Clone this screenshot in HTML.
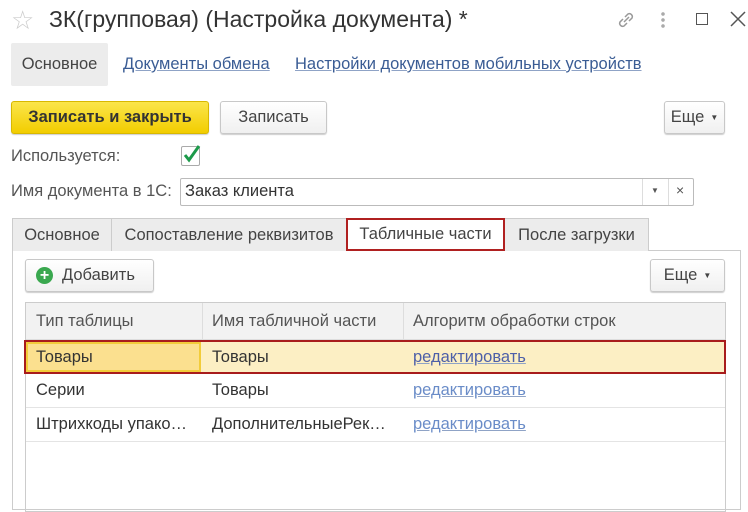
<!DOCTYPE html>
<html><head><meta charset="utf-8"><style>
*{box-sizing:border-box;margin:0;padding:0}
body{width:748px;height:502px;overflow:hidden;background:#fff;font-family:"Liberation Sans",Arial,sans-serif;font-size:16.5px;color:#333;position:relative}
.a{position:absolute;white-space:nowrap}
.btn{position:absolute;border:1px solid #c8c8c8;border-radius:3px;background:linear-gradient(#fff,#f0f0f0);box-shadow:0 1px 1px rgba(0,0,0,.2);display:flex;align-items:center;justify-content:center;color:#444}
.lnk{color:#3a5c94;text-decoration:underline;text-decoration-color:#8fa3c6}
.tab{position:absolute;top:218px;height:33px;background:#ececec;border:1px solid #ccc;border-bottom:none;display:flex;align-items:center;justify-content:center;color:#444}
.cell{position:absolute;display:flex;align-items:center;padding-left:11px}
</style></head><body>
<div class="a" style="left:11px;top:5px;font-size:26px;color:#ccc">☆</div>
<div class="a" style="left:49px;top:6px;font-size:23px;color:#333">ЗК(групповая) (Настройка документа) *</div>
<svg class="a" style="left:614px;top:8px" width="24" height="24" viewBox="0 0 24 24" fill="none" stroke="#999" stroke-width="1.5"><path d="M10 14l5-5M9 11l-3 3a3 3 0 0 0 4 4l3-3M15 13l3-3a3 3 0 0 0-4-4l-3 3"/></svg>
<div class="a" style="left:661px;top:11px;width:4px;height:17px;background:radial-gradient(circle,#aaa 1.6px,transparent 2px) 0 0/4px 6px"></div>
<div class="a" style="left:696px;top:13px;width:12px;height:12px;border:1.5px solid #555"></div>
<svg class="a" style="left:730px;top:11px" width="16" height="16" viewBox="0 0 16 16"><path d="M1 1L15 15M15 1L1 15" stroke="#555" stroke-width="1.5"/></svg>

<div class="a" style="left:11px;top:43px;width:97px;height:43px;background:#ececec;border-radius:2px;display:flex;align-items:center;justify-content:center;color:#444">Основное</div>
<div class="a lnk" style="left:123px;top:55px">Документы обмена</div>
<div class="a lnk" style="left:295px;top:55px">Настройки документов мобильных устройств</div>

<div class="btn" style="left:11px;top:101px;width:198px;height:33px;background:linear-gradient(#fbe54a,#f2cd00);border-color:#d8b800;font-weight:bold;color:#333">Записать и закрыть</div>
<div class="btn" style="left:220px;top:101px;width:107px;height:33px">Записать</div>
<div class="btn" style="left:664px;top:101px;width:61px;height:33px">Еще <span style="font-size:8px;margin-left:6px">▼</span></div>

<div class="a" style="left:11px;top:147px;color:#555">Используется:</div>
<div class="a" style="left:181px;top:146px;width:19px;height:20px;border:1px solid #aaa;border-radius:2px;background:#fff"></div>
<svg class="a" style="left:181px;top:143px" width="22" height="22" viewBox="0 0 22 22"><path d="M4 12l4 5L18 3" fill="none" stroke="#1c9a4a" stroke-width="3"/></svg>

<div class="a" style="left:11px;top:182px;color:#555">Имя документа в 1С:</div>
<div class="a" style="left:180px;top:178px;width:514px;height:28px;border:1px solid #bbb;border-radius:2px"></div>
<div class="a" style="left:185px;top:182px;color:#333">Заказ клиента</div>
<div class="a" style="left:642px;top:179px;width:1px;height:26px;background:#ddd"></div>
<div class="a" style="left:668px;top:179px;width:1px;height:26px;background:#ddd"></div>
<div class="a" style="left:651px;top:186px;font-size:8px;color:#555">▼</div>
<div class="a" style="left:676px;top:182px;font-size:14px;color:#555">×</div>

<div class="a" style="left:12px;top:250px;width:729px;height:260px;border:1px solid #ccc"></div>
<div class="tab" style="left:12px;width:100px">Основное</div>
<div class="tab" style="left:111px;width:236px">Сопоставление реквизитов</div>
<div class="tab" style="left:504px;width:145px">После загрузки</div>
<div class="tab" style="left:346px;width:159px;background:#fff;border:2px solid #b02020;height:33px">Табличные части</div>

<div class="btn" style="left:25px;top:259px;width:129px;height:33px;justify-content:flex-start;padding-left:10px"><span style="display:inline-block;width:17px;height:17px;border-radius:50%;background:#3aa84f;color:#fff;font-weight:bold;font-size:16px;line-height:17px;text-align:center;margin-right:9px">+</span>Добавить</div>
<div class="btn" style="left:650px;top:259px;width:75px;height:33px">Еще <span style="font-size:8px;margin-left:6px">▼</span></div>

<div class="a" style="left:25px;top:302px;width:701px;height:210px;border:1px solid #ccc"></div>
<div class="a" style="left:26px;top:303px;width:699px;height:37px;background:#f2f2f2;border-bottom:1px solid #ddd"></div>
<div class="a" style="left:202px;top:303px;width:1px;height:37px;background:#ddd"></div>
<div class="a" style="left:403px;top:303px;width:1px;height:37px;background:#ddd"></div>
<div class="cell" style="left:25px;top:303px;height:37px;color:#555">Тип таблицы</div>
<div class="cell" style="left:201px;top:303px;height:37px;color:#555">Имя табличной части</div>
<div class="cell" style="left:402px;top:303px;height:37px;color:#555">Алгоритм обработки строк</div>

<div class="a" style="left:24px;top:340px;width:702px;height:34px;background:#fcefc4;border:2px solid #a81c1c"></div>
<div class="a" style="left:26px;top:342px;width:175px;height:30px;background:#fbe08f;border:2px solid #f2cc3a"></div>
<div class="cell" style="left:25px;top:340px;height:34px">Товары</div>
<div class="cell" style="left:201px;top:340px;height:34px">Товары</div>
<div class="cell lnk" style="left:402px;top:340px;height:34px;color:#4d5fa8">редактировать</div>

<div class="cell" style="left:25px;top:374px;height:33px">Серии</div>
<div class="cell" style="left:201px;top:374px;height:33px">Товары</div>
<div class="cell lnk" style="left:402px;top:374px;height:33px;color:#6a8cc8">редактировать</div>
<div class="a" style="left:26px;top:407px;width:699px;height:1px;background:#e4e4e4"></div>
<div class="cell" style="left:25px;top:408px;height:33px">Штрихкоды упако…</div>
<div class="cell" style="left:201px;top:408px;height:33px">ДополнительныеРек…</div>
<div class="cell lnk" style="left:402px;top:408px;height:33px;color:#6a8cc8">редактировать</div>
<div class="a" style="left:26px;top:441px;width:699px;height:1px;background:#e4e4e4"></div>
</body></html>
